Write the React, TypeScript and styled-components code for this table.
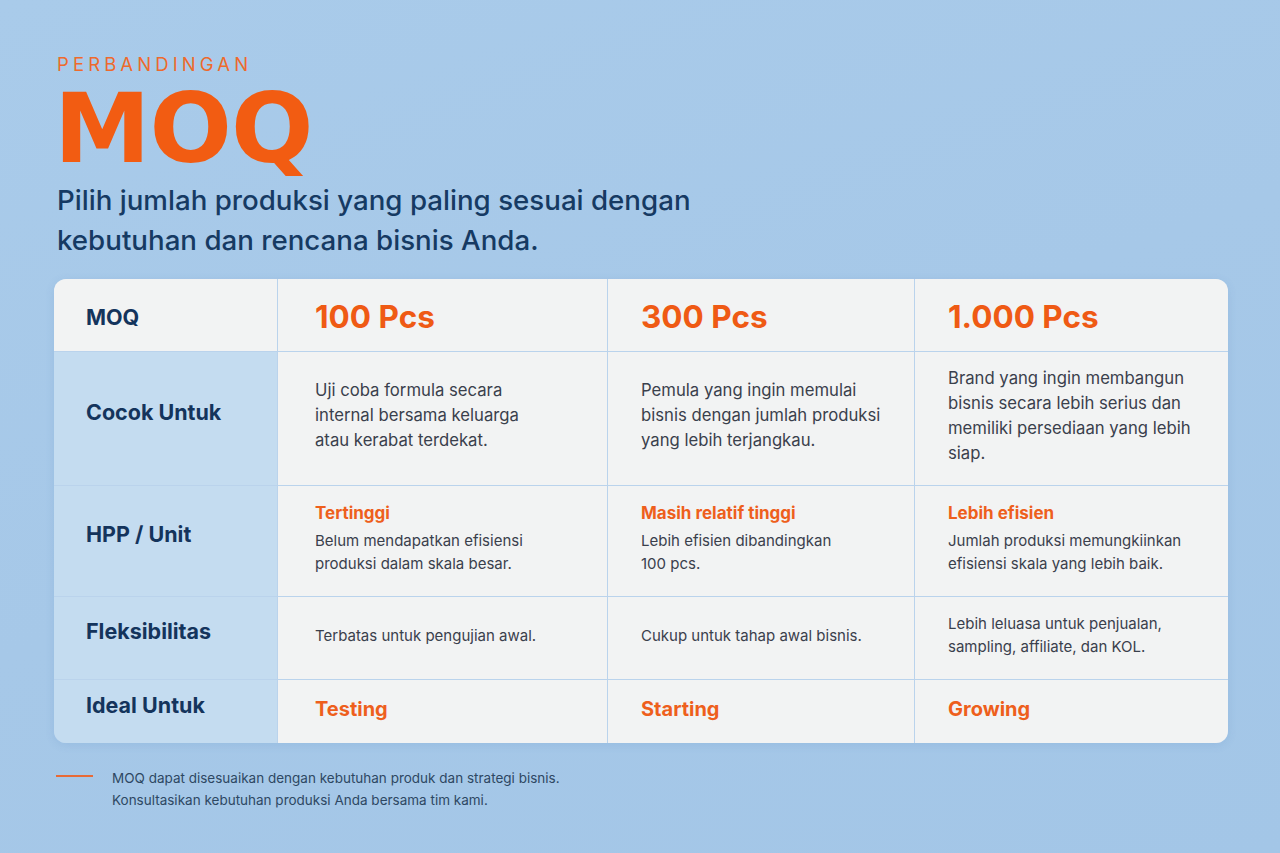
import React from "react";
import styled, { createGlobalStyle } from "styled-components";

const GlobalStyle = createGlobalStyle`
  html, body {
    margin: 0;
    padding: 0;
  }
  body {
    font-family: Inter, "Noto Sans", "Liberation Sans", sans-serif;
    background: #a7c9e8;
  }
`;

const Page = styled.div`
  width: 1280px;
  height: 853px;
  box-sizing: border-box;
  padding: 56px 52px 0 54px;
  background: linear-gradient(160deg, #a9cbea 0%, #a6c8e8 50%, #a3c6e7 100%);
  display: flex;
  flex-direction: column;
  overflow: hidden;
`;

const Header = styled.header`
  display: flex;
  flex-direction: column;
  padding-left: 3px;
`;

const Eyebrow = styled.div`
  font-size: 18.5px;
  line-height: 16px;
  font-weight: 400;
  letter-spacing: 4.1px;
  color: #ee6a2c;
`;

const Title = styled.h1`
  margin: 9px 0 0 -3px;
  font-family: "DejaVu Sans", Inter, sans-serif;
  font-size: 97px;
  line-height: 96px;
  font-weight: 700;
  letter-spacing: -1px;
  color: #f25c12;
`;

const Subtitle = styled.p`
  margin: 3px 0 0;
  font-size: 27.7px;
  line-height: 40px;
  font-weight: 500;
  color: #163a63;
`;

const Table = styled.div`
  margin-top: 19px;
  display: grid;
  grid-template-columns: 223px 329px 306px 313px;
  grid-template-rows: 72px 133px 110px 82px 63px;
  gap: 1px;
  background: #bad3ec;
  border-radius: 12px;
  overflow: hidden;
  box-shadow: 0 2px 10px rgba(60, 110, 170, 0.12);
`;

const Cell = styled.div<{ $label?: boolean; $head?: boolean; $pad?: number }>`
  display: flex;
  flex-direction: column;
  justify-content: center;
  padding: ${(p) => (p.$head ? "4px" : "0")} 20px
    ${(p) => (p.$head ? "0" : p.$label ? "14px" : "6px")} ${(p) => p.$pad ?? 33}px;
  background: ${(p) => (p.$label && !p.$head ? "#c4dcf0" : "#f2f3f3")};
`;

const RowLabel = styled.div`
  font-size: 21.5px;
  line-height: 26px;
  font-weight: 700;
  color: #14345c;
`;

const Qty = styled.div`
  font-size: 31.5px;
  line-height: 38px;
  font-weight: 700;
  color: #ef5a14;
`;

const Body = styled.div<{ $size?: number }>`
  font-size: ${(p) => p.$size ?? 16.7}px;
  line-height: ${(p) => ((p.$size ?? 16.7) >= 16 ? 25 : 23)}px;
  color: #3a404c;
`;

const Accent = styled.div<{ $size?: number }>`
  font-size: ${(p) => p.$size ?? 17}px;
  line-height: 24px;
  font-weight: 700;
  color: #ee5f1c;
  margin-bottom: ${(p) => ((p.$size ?? 17) < 19 ? 4 : 0)}px;
`;

const Footer = styled.footer`
  margin-top: 24px;
  display: flex;
  align-items: flex-start;
  gap: 19px;
`;

const Dash = styled.div`
  width: 37px;
  height: 2px;
  margin-top: 8px;
  margin-left: 2px;
  background: #e86a36;
`;

const Note = styled.p`
  margin: 0;
  font-size: 13.5px;
  line-height: 22px;
  color: #2e4863;
`;

const columns = [
  {
    qty: "100 Pcs",
    fit: ["Uji coba formula secara", "internal bersama keluarga", "atau kerabat terdekat."],
    hppTitle: "Tertinggi",
    hpp: ["Belum mendapatkan efisiensi", "produksi dalam skala besar."],
    flex: ["Terbatas untuk pengujian awal."],
    ideal: "Testing",
    pad: 37,
  },
  {
    qty: "300 Pcs",
    fit: ["Pemula yang ingin memulai", "bisnis dengan jumlah produksi", "yang lebih terjangkau."],
    hppTitle: "Masih relatif tinggi",
    hpp: ["Lebih efisien dibandingkan", "100 pcs."],
    flex: ["Cukup untuk tahap awal bisnis."],
    ideal: "Starting",
    pad: 33,
  },
  {
    qty: "1.000 Pcs",
    fit: [
      "Brand yang ingin membangun",
      "bisnis secara lebih serius dan",
      "memiliki persediaan yang lebih",
      "siap.",
    ],
    hppTitle: "Lebih efisien",
    hpp: ["Jumlah produksi memungkiinkan", "efisiensi skala yang lebih baik."],
    flex: ["Lebih leluasa untuk penjualan,", "sampling, affiliate, dan KOL."],
    ideal: "Growing",
    pad: 33,
  },
];

const Lines: React.FC<{ lines: string[]; size?: number }> = ({ lines, size }) => (
  <Body $size={size}>
    {lines.map((l, i) => (
      <React.Fragment key={i}>
        {l}
        {i < lines.length - 1 && <br />}
      </React.Fragment>
    ))}
  </Body>
);

export default function App() {
  return (
    <>
      <GlobalStyle />
      <Page>
        <Header>
          <Eyebrow>PERBANDINGAN</Eyebrow>
          <Title>MOQ</Title>
          <Subtitle>
            Pilih jumlah produksi yang paling sesuai dengan
            <br />
            kebutuhan dan rencana bisnis Anda.
          </Subtitle>
        </Header>

        <Table>
          <Cell $label $head $pad={32}>
            <RowLabel>MOQ</RowLabel>
          </Cell>
          {columns.map((c) => (
            <Cell key={c.qty} $head $pad={c.pad}>
              <Qty>{c.qty}</Qty>
            </Cell>
          ))}

          <Cell $label $pad={32}>
            <RowLabel>Cocok Untuk</RowLabel>
          </Cell>
          {columns.map((c) => (
            <Cell key={c.qty} $pad={c.pad}>
              <Lines lines={c.fit} />
            </Cell>
          ))}

          <Cell $label $pad={32}>
            <RowLabel>HPP / Unit</RowLabel>
          </Cell>
          {columns.map((c) => (
            <Cell key={c.qty} $pad={c.pad}>
              <Accent>{c.hppTitle}</Accent>
              <Lines lines={c.hpp} size={15} />
            </Cell>
          ))}

          <Cell $label $pad={32}>
            <RowLabel>Fleksibilitas</RowLabel>
          </Cell>
          {columns.map((c) => (
            <Cell key={c.qty} $pad={c.pad}>
              <Lines lines={c.flex} size={15} />
            </Cell>
          ))}

          <Cell $label $pad={32}>
            <RowLabel>Ideal Untuk</RowLabel>
          </Cell>
          {columns.map((c) => (
            <Cell key={c.qty} $pad={c.pad}>
              <Accent $size={20}>{c.ideal}</Accent>
            </Cell>
          ))}
        </Table>

        <Footer>
          <Dash />
          <Note>
            MOQ dapat disesuaikan dengan kebutuhan produk dan strategi bisnis.
            <br />
            Konsultasikan kebutuhan produksi Anda bersama tim kami.
          </Note>
        </Footer>
      </Page>
    </>
  );
}
